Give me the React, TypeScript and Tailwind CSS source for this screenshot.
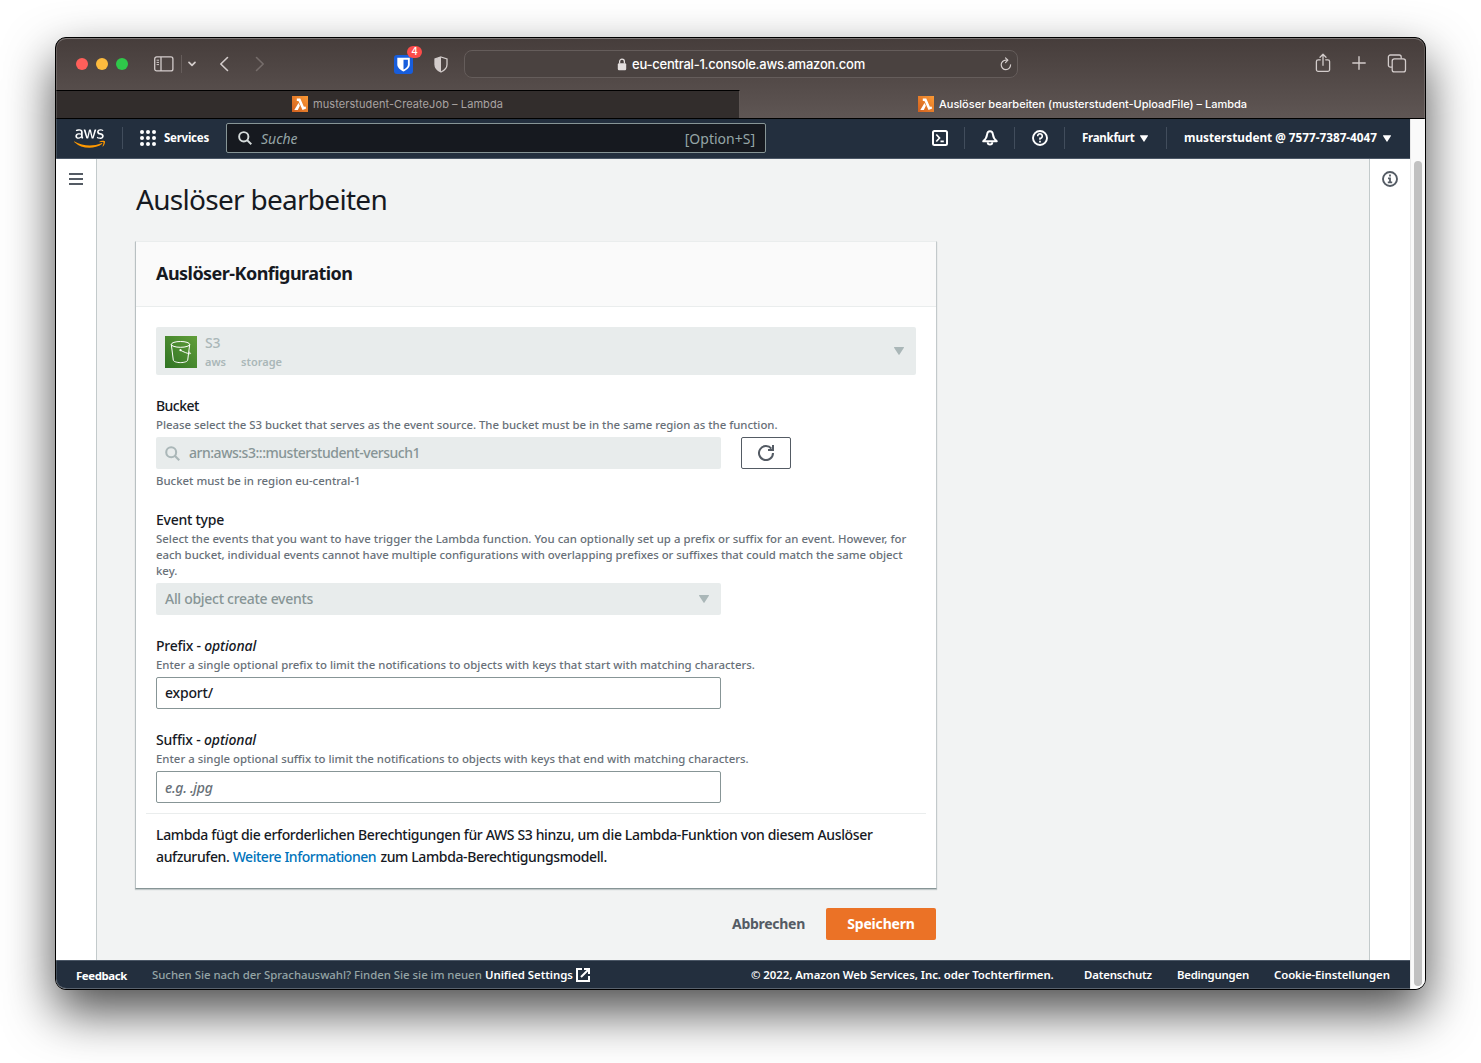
import React from 'react';
import { FaAws } from 'react-icons/fa';

/* ---------- Icons ---------- */

function LambdaFavicon() {
  return (
    <svg viewBox="0 0 16 16" className="size-4 shrink-0">
      <defs>
        <linearGradient id="lambda" x1="0" y1="1" x2="1" y2="0">
          <stop offset="0" stopColor="#d2601f" />
          <stop offset="1" stopColor="#fb9a35" />
        </linearGradient>
      </defs>
      <rect width="16" height="16" fill="url(#lambda)" />
      <path
        d="M4.800 2.400h3.500l3.600 8.400 1.600-.4.700 2.200-3.700 1.400-4-9H4.800zM6.500 7l1.400 2.700-2.100 4.300H2.300z"
        fill="#fff"
      />
    </svg>
  );
}

function SearchIcon({ className }: { className: string }) {
  return (
    <svg viewBox="0 0 16 16" fill="none" stroke="currentColor" strokeWidth="2.200" className={className}>
      <circle cx="6.600" cy="6.600" r="5.300" />
      <path d="M10.400 10.400 15.200 15.200" />
    </svg>
  );
}

function Caret({ className }: { className: string }) {
  return (
    <svg viewBox="0 0 10 8" fill="currentColor" className={className}>
      <path d="M.6 0h8.8a.5.5 0 0 1 .5.8L5.500 7.600a.6.6 0 0 1-1 0L.1.8A.5.5 0 0 1 .6 0z" />
    </svg>
  );
}

function S3Icon() {
  return (
    <svg viewBox="0 0 32 32" className="size-8 shrink-0">
      <defs>
        <linearGradient id="s3" x1="0" y1="1" x2="1" y2="0">
          <stop offset="0" stopColor="#2f7323" />
          <stop offset="1" stopColor="#619f3a" />
        </linearGradient>
      </defs>
      <rect width="32" height="32" fill="url(#s3)" />
      <g fill="none" stroke="#fff" strokeWidth="1">
        <ellipse cx="15.500" cy="8.400" rx="9.200" ry="2.900" />
        <path d="M6.300 8.400 8.300 24.200c.3 1.300 3.400 2.400 7.200 2.400s6.900-1.100 7.200-2.400L24.700 8.400" />
        <path d="M15.500 14.300c3 1.600 6.800 3.200 9.300 3.500 1.300 0 .9-1-.9-1.900" />
      </g>
      <circle cx="15.500" cy="14.200" r="1.100" fill="#fff" />
    </svg>
  );
}

/* ---------- Browser chrome ---------- */

function Toolbar() {
  return (
    <div className="flex h-[52px] items-center text-[#d3cccb]">
      <div className="ml-5 flex gap-2">
        <span className="size-3 rounded-full bg-[#ff5f5a]" />
        <span className="size-3 rounded-full bg-[#fdbb3e]" />
        <span className="size-3 rounded-full bg-[#2fc84a]" />
      </div>
      <svg viewBox="0 0 20 16" fill="none" stroke="currentColor" strokeWidth="1.300" className="ml-[26px] h-4 w-5">
        <rect x=".7" y=".9" width="18.200" height="14" rx="2" />
        <path d="M7 1v14" />
        <path d="M2.600 4.200h2.400M2.600 6.400h2.400M2.600 8.600h2.400" strokeWidth="1" />
      </svg>
      <span className="ml-[7px] h-[18px] w-px bg-[#665d5b]" />
      <svg viewBox="0 0 8 6" fill="none" stroke="currentColor" strokeWidth="1.700" strokeLinecap="round" strokeLinejoin="round" className="ml-1.5 h-1.5 w-2">
        <path d="M1 1.300 4 4.300l3-3" />
      </svg>
      <svg viewBox="0 0 10 16" fill="none" stroke="currentColor" strokeWidth="1.600" strokeLinecap="round" strokeLinejoin="round" className="ml-[23px] h-4 w-2.5">
        <path d="M8.500 1.500 1.800 8l6.700 6.500" />
      </svg>
      <svg viewBox="0 0 10 16" fill="none" stroke="#766d6b" strokeWidth="1.600" strokeLinecap="round" strokeLinejoin="round" className="ml-[26px] h-4 w-2.5">
        <path d="M1.500 1.500 8.200 8l-6.700 6.500" />
      </svg>
      <div className="relative ml-[129px] size-[19px]">
        <svg viewBox="0 0 19 19" className="size-[19px]">
          <rect width="19" height="19" rx="3" fill="#175ddc" />
          <path d="M3.300 2.800h12.500v6.800c0 3.200-3.500 5.600-6.300 7-2.800-1.400-6.200-3.800-6.200-7z" fill="#fff" />
          <path d="M9.500 4.700h4.400v5c0 2-2.300 3.700-4.400 4.900z" fill="#175ddc" />
        </svg>
        <span className="absolute -top-[9px] left-[13px] flex h-3 w-[15px] items-center justify-center rounded-full bg-[#fc4c4a] font-[Inter] text-[10px] font-medium text-white">
          4
        </span>
      </div>
      <svg viewBox="0 0 14 17" className="ml-[21px] h-[17px] w-3.5">
        <path d="M7 1 13 3v5.600c0 3.600-2.500 5.800-6 7.400-3.500-1.600-6-3.800-6-7.400V3z" fill="none" stroke="currentColor" strokeWidth="1.300" />
        <path d="M7 1v15c-3.500-1.600-6-3.800-6-7.400V3z" fill="currentColor" />
      </svg>
      <div className="ml-4 flex h-7 w-[554px] items-center rounded-lg border border-[#655d5b] bg-[#4a4240] text-white">
        <svg viewBox="0 0 10 13" className="ml-[152px] h-[13px] w-2.5">
          <rect x=".8" y="5.300" width="8.400" height="7" rx="1.200" fill="#e4dfde" />
          <path d="M2.600 5.600V3.600a2.400 2.400 0 0 1 4.800 0v2" fill="none" stroke="#e4dfde" strokeWidth="1.300" />
        </svg>
        <span className="ml-[5px] pt-0.5 font-[Inter] text-[13px] font-medium tracking-[-0.234px] whitespace-nowrap">
          eu-central-1.console.aws.amazon.com
        </span>
        <svg viewBox="0 0 12 14" fill="none" stroke="#d3cccb" strokeWidth="1.200" strokeLinecap="round" strokeLinejoin="round" className="mr-[5px] ml-auto h-3.5 w-3">
          <path d="M10.600 7.800A4.700 4.700 0 1 1 6 3.200h1.400" />
          <path d="M5.500.9 7.900 3.200 5.500 5.600" />
        </svg>
      </div>
      <svg viewBox="0 0 16 20" fill="none" stroke="currentColor" strokeWidth="1.300" strokeLinecap="round" strokeLinejoin="round" className="-mt-0.5 ml-auto h-5 w-4">
        <path d="M5.300 6.800H3.200A1.800 1.800 0 0 0 1.400 8.600v8A1.800 1.800 0 0 0 3.200 18.400h9.600a1.800 1.800 0 0 0 1.800-1.800v-8a1.800 1.800 0 0 0-1.800-1.800h-2.100" />
        <path d="M8 12.300V1.500M5 4.200l3-3 3 3" />
      </svg>
      <svg viewBox="0 0 14 14" stroke="currentColor" strokeWidth="1.400" strokeLinecap="round" className="-mt-0.5 ml-[21px] size-3.5">
        <path d="M7 .8v12.400M.8 7h12.400" />
      </svg>
      <svg viewBox="0 0 20 19" fill="none" stroke="currentColor" strokeWidth="1.300" strokeLinejoin="round" className="-mt-0.5 mr-[18px] ml-[21px] h-[19px] w-5">
        <path d="M5 13.200H3.400a2 2 0 0 1-2-2V3a2 2 0 0 1 2-2h8.800a2 2 0 0 1 2 2v1.700" />
        <rect x="5.200" y="4.900" width="13.300" height="13" rx="2.200" />
      </svg>
    </div>
  );
}

function TabBar() {
  return (
    <div className="flex h-7 font-[Inter] text-[11px] leading-7 whitespace-nowrap">
      <div className="flex w-[684px] items-center justify-center border-t border-r border-t-black border-r-[#5d5553] bg-[#322d2c] pb-px text-[#a9a3a2]">
        <LambdaFavicon />
        <span className="ml-[5px] tracking-[0.076px]">musterstudent-CreateJob – Lambda</span>
      </div>
      <div className="flex flex-1 items-center justify-center text-white">
        <LambdaFavicon />
        <span className="ml-[5px] font-medium">Auslöser bearbeiten (musterstudent-UploadFile) – Lambda</span>
      </div>
    </div>
  );
}

/* ---------- AWS console ---------- */

function NavDivider({ className }: { className: string }) {
  return <span className={`h-[22px] w-px shrink-0 bg-[#414d5c] ${className}`} />;
}

function ConsoleNav() {
  return (
    <div className="flex h-10 items-center border-b border-[#4b5766] bg-[#232f3e] pb-px text-xs font-bold whitespace-nowrap text-white">
      <div className="ml-[18px] grid shrink-0">
        <FaAws size={31} className="col-start-1 row-start-1 [clip-path:inset(0_0_46%_0)]" />
        <FaAws size={31} className="col-start-1 row-start-1 text-[#f90] [clip-path:inset(54%_0_0_0)]" />
      </div>
      <NavDivider className="ml-[17px]" />
      <svg viewBox="0 0 16 16" fill="currentColor" className="ml-[17px] size-4">
        {[2, 8, 14].map((y) => [2, 8, 14].map((x) => <circle key={`${x}-${y}`} cx={x} cy={y} r="2" />))}
      </svg>
      <span className="ml-2 w-[45px] text-[11.500px] tracking-[-0.25px]">Services</span>
      <div className="ml-[17px] flex h-[30px] w-[540px] items-center rounded-xs border border-[#879596] bg-[#16191f] text-sm font-normal text-[#95a5a6]">
        <SearchIcon className="ml-[11px] size-3.5 text-[#d5dbdb]" />
        <span className="ml-[9px] pt-px italic">Suche</span>
        <span className="mr-[10px] ml-auto pt-px">[Option+S]</span>
      </div>
      <svg viewBox="0 0 16 16" fill="none" stroke="currentColor" strokeWidth="2" className="ml-[166px] size-4">
        <rect x="1" y="1" width="14" height="14" rx="1.500" />
        <path d="M4.300 4.500 7.500 8l-3.200 3.500M8.500 11.300h3.300" strokeWidth="1.700" />
      </svg>
      <NavDivider className="ml-4" />
      <svg viewBox="0 0 16 16" fill="none" stroke="currentColor" strokeWidth="1.900" strokeLinejoin="round" className="ml-[17px] size-4">
        <path d="M8 1.200c-1.800 0-2.700 1.300-2.900 3.200C4.800 7.500 3.500 9.300 1.200 11.300h13.600c-2.300-2-3.600-3.800-3.900-6.900C10.700 2.500 9.800 1.200 8 1.200z" />
        <path d="M5.700 12.200a2.300 2.300 0 0 0 4.600 0" />
      </svg>
      <NavDivider className="ml-4" />
      <svg viewBox="0 0 16 16" fill="none" stroke="currentColor" strokeWidth="1.900" className="ml-[17px] size-4">
        <circle cx="8" cy="8" r="7" />
        <path d="M5.700 6.300A2.300 2.300 0 1 1 8 8.400v1.300" strokeWidth="1.600" />
        <path d="M8 10.800v1.700" strokeWidth="1.700" />
      </svg>
      <NavDivider className="ml-4" />
      <span className="ml-[17px] w-[52px] text-[11.500px] tracking-[-0.26px]">Frankfurt</span>
      <Caret className="ml-1.5 h-[7px] w-2" />
      <NavDivider className="ml-[18px]" />
      <span className="ml-[17px] text-[11.750px]">musterstudent @ 7577-7387-4047</span>
      <Caret className="ml-1.5 h-[7px] w-2" />
    </div>
  );
}

function Label({ children }: { children: React.ReactNode }) {
  return <div className="text-sm leading-[22px] font-medium tracking-[-0.25px]">{children}</div>;
}

function Hint({ children, className }: { children: React.ReactNode; className: string }) {
  return (
    <div className={`text-[11.400px] leading-4 font-medium whitespace-nowrap text-[#687078] ${className}`}>
      {children}
    </div>
  );
}

function ConfigurationCard() {
  return (
    <section className="h-[648px] w-[802px] border border-t-[#eaeded] border-r-[#c3c9cb] border-b-[#879596] border-l-[#b9c0c2] bg-white shadow-[0_1px_1px_rgba(0,28,36,0.2)]">
      <header className="flex h-[65px] items-center border-b border-[#eaeded] bg-[#fafafa] px-5 pb-0.5">
        <h2 className="text-lg font-bold tracking-[-0.538px]">Auslöser-Konfiguration</h2>
      </header>

      <div className="mx-5 mt-5 flex h-12 w-[760px] items-center rounded-xs bg-[#e8ecec] text-[#aab7b8]">
        <span className="mt-0.5 ml-[9px]">
          <S3Icon />
        </span>
        <div className="ml-2 pt-0.5">
          <div className="text-sm leading-[19px] font-medium tracking-[-0.1px]">S3</div>
          <div className="flex gap-[15px] text-[11px] leading-[19px] font-semibold">
            <span>aws</span>
            <span>storage</span>
          </div>
        </div>
        <Caret className="mr-3 ml-auto h-2 w-2.5" />
      </div>

      <div className="mx-5 mt-5 flex flex-col gap-5">
        <div>
          <Label>
            <span className="tracking-[-0.55px]">Bucket</span>
          </Label>
          <Hint className="tracking-[-0.025px]">
            Please select the S3 bucket that serves as the event source. The bucket must be in the same region as the
            function.
          </Hint>
          <div className="mt-1 flex gap-5">
            <div className="flex h-8 w-[565px] items-center rounded-xs bg-[#e8ecec] text-sm font-medium text-[#879596]">
              <SearchIcon className="ml-[9px] size-[15px] text-[#aab7b8]" />
              <span className="ml-[9px] tracking-[-0.477px]">arn:aws:s3:::musterstudent-versuch1</span>
            </div>
            <button className="flex h-8 w-[50px] items-center justify-center rounded-xs border border-[#545b64] text-[#545b64]">
              <svg viewBox="0 0 16 16" fill="none" stroke="currentColor" strokeWidth="2" className="size-4">
                <path d="M15 8a7 7 0 1 1-1.600-4.400" />
                <path d="M15 0v5h-5" />
              </svg>
            </button>
          </div>
          <Hint className="mt-1">Bucket must be in region eu-central-1</Hint>
        </div>

        <div>
          <Label>Event type</Label>
          <Hint className="tracking-[0.014px]">
            Select the events that you want to have trigger the Lambda function. You can optionally set up a prefix or
            suffix for an event. However, for
          </Hint>
          <Hint className="tracking-[-0.027px]">
            each bucket, individual events cannot have multiple configurations with overlapping prefixes or suffixes
            that could match the same object
          </Hint>
          <Hint className="tracking-normal">key.</Hint>
          <div className="mt-1 flex h-8 w-[565px] items-center rounded-xs bg-[#e8ecec] text-sm font-medium text-[#879596]">
            <span className="ml-[9px] tracking-[-0.292px]">All object create events</span>
            <Caret className="mr-3 ml-auto h-2 w-2.5 text-[#aab7b8]" />
          </div>
        </div>

        <div>
          <Label>
            Prefix - <i className="tracking-[-0.113px]">optional</i>
          </Label>
          <Hint className="tracking-normal">
            Enter a single optional prefix to limit the notifications to objects with keys that start with matching
            characters.
          </Hint>
          <div className="mt-1 flex h-8 w-[565px] items-center rounded-xs border border-[#879596] px-2 text-sm font-medium tracking-[-0.183px]">
            export/
          </div>
        </div>

        <div>
          <Label>
            <span className="tracking-[-0.18px]">Suffix - </span>
            <i className="tracking-[-0.113px]">optional</i>
          </Label>
          <Hint className="tracking-normal">
            Enter a single optional suffix to limit the notifications to objects with keys that end with matching
            characters.
          </Hint>
          <div className="mt-1 flex h-8 w-[565px] items-center rounded-xs border border-[#879596] px-2 pt-0.5 text-sm font-medium tracking-[-0.3px] text-[#687078] italic">
            e.g. .jpg
          </div>
        </div>
      </div>

      <div className="mx-2.5 mt-2.5 border-t border-[#eaeded] px-2.5 pt-2.5 text-sm leading-[22px] font-medium whitespace-nowrap">
        <p className="tracking-[-0.35px]">
          Lambda fügt die erforderlichen Berechtigungen für AWS S3 hinzu, um die Lambda-Funktion von diesem Auslöser
        </p>
        <p className="tracking-[-0.38px]">
          aufzurufen. <a className="mr-px tracking-[-0.461px] text-[#0073bb]">Weitere Informationen</a> zum
          Lambda-Berechtigungsmodell.
        </p>
      </div>
    </section>
  );
}

function ConsoleFooter() {
  return (
    <div className="flex h-[29px] items-center border-t border-[#4b5766] bg-[#232f3e] text-[11.400px] font-semibold whitespace-nowrap text-white">
      <span className="ml-5 w-[51px] pt-0.5 font-bold tracking-[-0.38px]">Feedback</span>
      <span className="ml-[25px] w-[333px] font-medium tracking-[-0.02px] text-[#95a5a6]">
        Suchen Sie nach der Sprachauswahl? Finden Sie sie im neuen
      </span>
      <span className="w-[88px] tracking-[-0.05px]">Unified Settings</span>
      <svg viewBox="0 0 14 14" fill="none" stroke="currentColor" strokeWidth="2" className="ml-[3px] size-3.5">
        <path d="M6 1H1v12h12V8" />
        <path d="M8 1h5v5M13 1 5 9" />
      </svg>
      <span className="ml-auto w-[303px] tracking-[-0.06px]">© 2022, Amazon Web Services, Inc. oder Tochterfirmen.</span>
      <span className="ml-[30px] w-[68px] tracking-[-0.15px]">Datenschutz</span>
      <span className="ml-[25px] w-[72px] tracking-[-0.235px]">Bedingungen</span>
      <span className="mr-5 ml-[25px] w-[116px] tracking-[-0.072px]">Cookie-Einstellungen</span>
    </div>
  );
}

function Console() {
  return (
    <div className="flex w-[1354px] flex-col font-['Noto_Sans',sans-serif] text-[#16191f]">
      <ConsoleNav />
      <div className="flex min-h-0 flex-1">
        <aside className="w-[41px] border-r border-[#c3cacb] bg-white">
          <svg viewBox="0 0 14 12" stroke="#545b64" strokeWidth="2" className="mt-3.5 ml-[13px] h-3 w-3.5">
            <path d="M0 1h14M0 6h14M0 11h14" />
          </svg>
        </aside>
        <main className="flex-1 bg-[#f2f3f3] pl-[38px]">
          <h1 className="mt-[22px] h-[60px] pl-px text-[28px] leading-9 tracking-[-0.713px]">Auslöser bearbeiten</h1>
          <ConfigurationCard />
          <div className="mt-[19px] flex w-[801px] items-center justify-end text-sm font-bold">
            <button className="mr-[21px] tracking-[-0.28px] text-[#545b64]">Abbrechen</button>
            <button className="h-8 w-[110px] rounded-xs bg-[#eb7226] tracking-[-0.184px] text-white">Speichern</button>
          </div>
        </main>
        <aside className="w-[41px] border-l border-[#c3cacb] bg-white">
          <svg viewBox="0 0 16 16" fill="none" stroke="#545b64" className="mt-3 ml-3 size-4">
            <circle cx="8" cy="8" r="7" strokeWidth="1.900" />
            <path d="M8 3.600v2M6 7.400h2v4M5.800 11.300h4.400" strokeWidth="1.800" />
          </svg>
        </aside>
      </div>
      <ConsoleFooter />
    </div>
  );
}

export default function App() {
  return (
    <div className="h-[1063px] w-[1481px] overflow-hidden bg-white pt-[37px] pl-[55px]">
      <div className="relative h-[953px] w-[1371px] rounded-[11px] border border-black bg-black shadow-[0_22px_50px_rgba(0,0,0,0.7)]">
        <div className="flex h-full flex-col overflow-hidden rounded-[10px]">
          <div className="h-[81px] border-b border-black bg-linear-to-b from-[#463d3b] to-[#5f5654]">
            <Toolbar />
            <TabBar />
          </div>
          <div className="flex min-h-0 flex-1 bg-white">
            <Console />
            <div className="flex flex-1 border-l border-[#e8e8e8] bg-[#fafafa] pt-[42px] pb-[3px] pl-[3px]">
              <div className="w-2 rounded-full bg-[#c1c1c1]" />
            </div>
          </div>
        </div>
        <div className="pointer-events-none absolute inset-0 rounded-[10px] border border-t-white/30 border-r-white/15 border-b-white/25 border-l-white/15" />
      </div>
    </div>
  );
}
